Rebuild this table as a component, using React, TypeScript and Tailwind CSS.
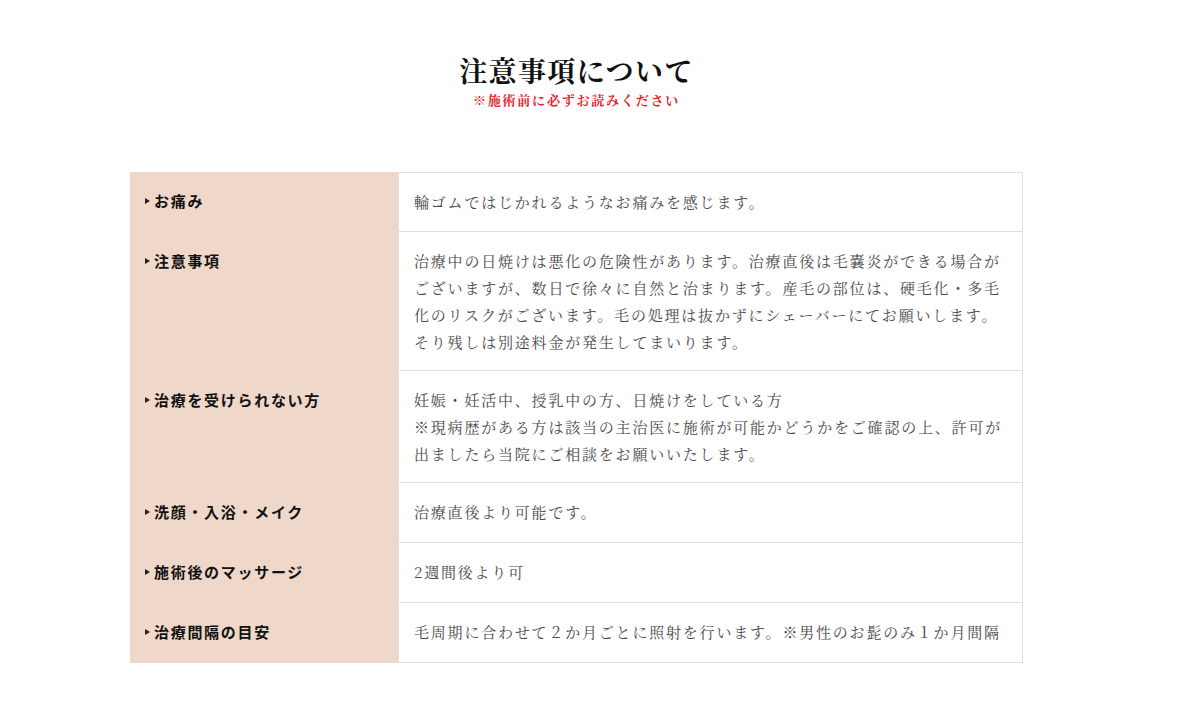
import React from 'react';

const serif = '"Noto Serif CJK JP", "Liberation Serif", "Noto Sans CJK JP", serif';
const sans = '"Noto Sans CJK JP", "Noto Sans", sans-serif';

type Row = { label: string; lines: string[] };

const ROWS: Row[] = [
  { label: 'お痛み', lines: ['輪ゴムではじかれるようなお痛みを感じます。'] },
  {
    label: '注意事項',
    lines: [
      '治療中の日焼けは悪化の危険性があります。治療直後は毛嚢炎ができる場合が',
      'ございますが、数日で徐々に自然と治まります。産毛の部位は、硬毛化・多毛',
      '化のリスクがございます。毛の処理は抜かずにシェーバーにてお願いします。',
      'そり残しは別途料金が発生してまいります。',
    ],
  },
  {
    label: '治療を受けられない方',
    lines: [
      '妊娠・妊活中、授乳中の方、日焼けをしている方',
      '※現病歴がある方は該当の主治医に施術が可能かどうかをご確認の上、許可が',
      '出ましたら当院にご相談をお願いいたします。',
    ],
  },
  { label: '洗顔・入浴・メイク', lines: ['治療直後より可能です。'] },
  { label: '施術後のマッサージ', lines: ['2週間後より可'] },
  { label: '治療間隔の目安', lines: ['毛周期に合わせて２か月ごとに照射を行います。※男性のお髭のみ１か月間隔'] },
];

export default function App() {
  return (
    <div className="min-h-[718px] w-full bg-white">
      <div className="ml-[130px] w-[893px] pt-[52px]">
        <div className="flex flex-col items-center">
          <h2
            className="text-[28px] font-bold leading-[36px] tracking-[1.4px] text-[#111]"
            style={{ fontFamily: serif }}
          >
            注意事項について
          </h2>
          <p
            className="mt-[2px] text-[13px] font-bold leading-[20px] tracking-[1.8px] text-[#e8202a]"
            style={{ fontFamily: serif }}
          >
            ※施術前に必ずお読みください
          </p>
        </div>

        <div className="mt-[62px] flex flex-col">
          {ROWS.map((row, i) => (
            <div key={row.label} className="flex min-h-[60px]">
              <div className="w-[268px] shrink-0 bg-[#efd7ca] px-[15px] py-[15px]">
                <p
                  className="flex items-center text-[15px] font-bold leading-[27px] tracking-[1.7px] text-[#111]"
                  style={{ fontFamily: sans }}
                >
                  <span className="mr-[4px] inline-block h-0 w-0 border-y-[3px] border-l-[5px] border-y-transparent border-l-[#222]" />
                  {row.label}
                </p>
              </div>
              <div
                className={`flex-1 border-x border-b border-[#dedede] px-[15px] py-[15px] ${
                  i === 0 ? 'border-t' : ''
                }`}
              >
                <p
                  className="whitespace-nowrap text-[15px] leading-[27px] tracking-[1.8px] text-[#4a4a4a]"
                  style={{ fontFamily: serif }}
                >
                  {row.lines.map((line, j) => (
                    <React.Fragment key={j}>
                      {j > 0 && <br />}
                      {line}
                    </React.Fragment>
                  ))}
                </p>
              </div>
            </div>
          ))}
        </div>
      </div>
    </div>
  );
}
